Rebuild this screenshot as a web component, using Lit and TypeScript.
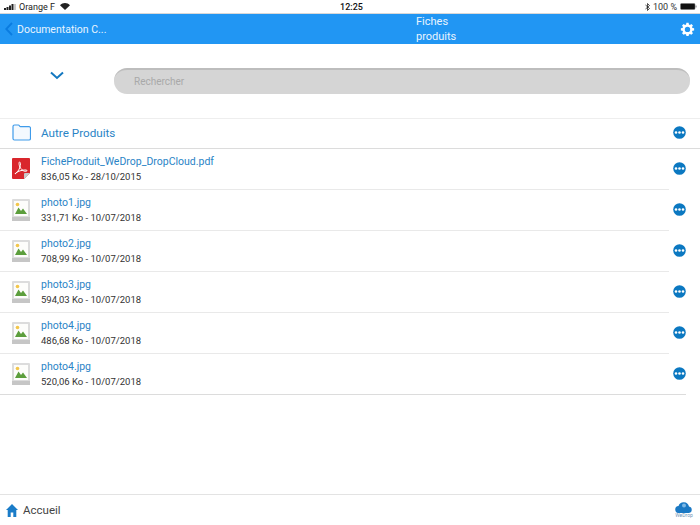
import { LitElement, html, css, svg } from "lit";
import { customElement } from "lit/decorators.js";

const files = [
  { name: "FicheProduit_WeDrop_DropCloud.pdf", meta: "836,05 Ko - 28/10/2015", pdf: true },
  { name: "photo1.jpg", meta: "331,71 Ko - 10/07/2018" },
  { name: "photo2.jpg", meta: "708,99 Ko - 10/07/2018" },
  { name: "photo3.jpg", meta: "594,03 Ko - 10/07/2018" },
  { name: "photo4.jpg", meta: "486,68 Ko - 10/07/2018" },
  { name: "photo4.jpg", meta: "520,06 Ko - 10/07/2018" },
];

const more = html`<svg class="more" width="13" height="13" viewBox="0 0 13 13"><circle cx="6.5" cy="6.5" r="6.3" fill="#0b78c1"/><circle cx="3" cy="6.5" r="1.3" fill="#fff"/><circle cx="6.5" cy="6.5" r="1.3" fill="#fff"/><circle cx="10" cy="6.5" r="1.3" fill="#fff"/></svg>`;

const pdfIcon = html`<svg width="18" height="21" viewBox="0 0 18 21"><path d="M1 0h16a1 1 0 0 1 1 1v14l-6 6H1a1 1 0 0 1-1-1V1a1 1 0 0 1 1-1z" fill="#d9262c"/><path d="M18 15h-5a1 1 0 0 0-1 1v5z" fill="#c9c9c9"/><path d="M3 16c2-1 4-4 5-7 .6-2 .6-5-.3-5-1 0-.8 3 .2 5 1 2 3 4 5 4.300 1.500.2 2.500-.3 2-.9-.6-.7-3-.5-6 .2-2.500.6-5.500 2-5.900 3.400z" fill="none" stroke="#fff" stroke-width="1"/></svg>`;

const imgIcon = html`<svg width="18" height="22" viewBox="0 0 18 22"><rect width="18" height="22" rx="1" fill="#dcdcdc"/><rect x="0" y="18" width="18" height="4" fill="#c6c6c6"/><rect x="2" y="2" width="14" height="15" fill="#fdfdfb"/><circle cx="5.500" cy="5.500" r="1.800" fill="#f3c64b"/><path d="M3 15l3.500-6.500 2.500 3.500 2-2.500 4 5.500z" fill="#5c9e3c"/></svg>`;

const folderIcon = html`<svg width="19" height="17" viewBox="0 0 19 17"><path d="M1 3V2.500a1.500 1.500 0 0 1 1.500-1.500h4c.8 0 1 1.700 2 1.700h8.500A1.500 1.500 0 0 1 18.500 4.200v10.300A1.500 1.500 0 0 1 17 16H2.500A1.500 1.500 0 0 1 1 14.500z" fill="#f4f9fe" stroke="#3f9bea" stroke-width="1.200"/></svg>`;

const gear = svg`<path fill="#fff" fill-rule="evenodd" d="M6.600 0h2.800l.4 2.100 1.300.6 1.800-1.200 2 2-1.200 1.800.6 1.300 2.100.4v2.800l-2.100.4-.6 1.300 1.200 1.800-2 2-1.800-1.200-1.300.6-.4 2.100H6.600l-.4-2.100-1.300-.6-1.800 1.200-2-2 1.200-1.800-.6-1.300L-.4 9.800V7l2.100-.4.600-1.300L1.100 3.500l2-2 1.800 1.200 1.300-.6zM8 5a3.400 3.400 0 1 0 0 6.800A3.400 3.400 0 0 0 8 5z"/>`;

@customElement("app-root")
export class AppRoot extends LitElement {
  static styles = css`
    :host { display: flex; flex-direction: column; width: 700px; height: 525px; background: #fff; overflow: hidden;
      font-family: Roboto, "Liberation Sans", sans-serif; }
    .status { height: 13px; display: grid; grid-template-columns: 1fr auto 1fr; align-items: center; font-size: 9px; color: #222; padding: 0 3px 0 4px; box-sizing: border-box; }
    .status .l, .status .r { display: flex; align-items: center; gap: 3px; }
    .status .r { justify-content: flex-end; color: #333; }
    .time { font-weight: 500; color: #111; margin-left: 2px; }
    .sep { height: 1px; background: #d8d8d8; }
    nav { height: 30px; background: #2196f3; display: grid; grid-template-columns: 406px auto 1fr; align-items: center; color: #e8f4fe; font-size: 10.500px; flex: none; box-sizing: border-box; padding: 0 5px; }
    .back { display: flex; align-items: center; gap: 4px; }
    .title { line-height: 15px; white-space: nowrap; margin-left: 5px; font-size: 11px; }
    .gear { justify-self: end; display: block; margin-top: 1px; }
    .search { height: 74px; flex: none; display: flex; align-items: center; box-sizing: border-box; padding: 0 10px 0 50px; gap: 50px; }
    .chev { margin-bottom: 12px; flex: none; }
    .pill { flex: 1; height: 26px; border-radius: 13px; background: #d5d5d5; border-top: 2px solid #bdbdbd; box-sizing: border-box; display: flex; align-items: center; padding: 0 0 2px 20px; color: #a9a9a9; font-size: 10px; }
    .folder { height: 31px; flex: none; box-sizing: border-box; border-top: 1px solid #eeeeee; border-bottom: 1px solid #dcdcdc; display: flex; align-items: center; padding: 0 14px 2px 12px; }
    .folder .fname { color: #2a84c6; font-size: 11.700px; margin-left: 10px; flex: 1; }
    .row { height: 41px; flex: none; display: flex; align-items: center; padding: 0 14px 2px 12px; position: relative; box-sizing: border-box; }
    .row .ic { width: 18px; height: 22px; flex: none; display: flex; }
    .body { margin-left: 11px; flex: 1; display: flex; flex-direction: column; gap: 2px; }
    .name { color: #2a84c6; font-size: 10.500px; line-height: 14px; }
    .meta { color: #333; font-size: 9.500px; line-height: 12px; }
    .rule { position: absolute; left: 0; bottom: 0; width: 669px; height: 1px; background: #e9e9e9; }
    .rule.last { width: 686px; background: #dcdcdc; }
    .more { flex: none; display: block; }
    .row .more { margin-top: -1px; }
    .grow { flex: 1; }
    footer { height: 31px; flex: none; box-sizing: border-box; border-top: 1px solid #e3e3e3; display: flex; align-items: center; padding: 0 7px 0 6px; gap: 5px; color: #444; font-size: 11.500px; }
    .logo { margin-left: auto; display: flex; flex-direction: column; align-items: center; font-size: 5px; color: #6f93b5; line-height: 5px; }
  `;

  render() {
    return html`
      <div class="status">
        <div class="l">
          <svg width="12" height="6" viewBox="0 0 12 6"><rect x="0" y="4" width="2" height="2" fill="#222"/><rect x="2.500" y="3" width="2" height="3" fill="#222"/><rect x="5" y="1.500" width="2" height="4.500" fill="#222"/><rect x="7.500" y="0" width="2" height="6" fill="#222"/><rect x="10.500" y="0" width="1" height="6" fill="#999"/></svg>
          <span>Orange F</span>
          <svg width="10" height="7" viewBox="0 0 10 7" style="margin-left:2px"><path d="M5 7L0 2.200C2.800-.7 7.200-.7 10 2.200z" fill="#222"/></svg>
        </div>
        <div class="time">12:25</div>
        <div class="r">
          <svg width="5" height="8" viewBox="0 0 5 8"><path d="M.5 2l4 3.500L2.500 7.500v-7l2 2-4 3.500" fill="none" stroke="#222" stroke-width=".8"/></svg>
          <span>100 %</span>
          <svg width="17" height="7" viewBox="0 0 17 7"><rect x=".5" y=".5" width="14.500" height="6" rx="1" fill="#111" stroke="#777" stroke-width=".5"/><rect x="15.500" y="2.500" width="1" height="2" fill="#777"/></svg>
        </div>
      </div>
      <div class="sep"></div>
      <nav>
        <div class="back">
          <svg width="8" height="14" viewBox="0 0 8 14"><path d="M7 1L1.200 7 7 13" fill="none" stroke="#0a7ce0" stroke-width="1.800"/></svg>
          <span>Documentation C...</span>
        </div>
        <div class="title">Fiches<br />produits</div>
        <svg class="gear" width="15" height="15" viewBox="-1 -1 18 19">${gear}</svg>
      </nav>
      <div class="search">
        <svg class="chev" width="14" height="9" viewBox="0 0 14 9"><path d="M1 1.500l6 5.500 6-5.500" fill="none" stroke="#1478c0" stroke-width="2"/></svg>
        <div class="pill">Rechercher</div>
      </div>
      <div class="folder">
        ${folderIcon}
        <span class="fname">Autre Produits</span>
        ${more}
      </div>
      ${files.map(
        (f, i) => html`<div class="row">
          <div class="ic">${f.pdf ? pdfIcon : imgIcon}</div>
          <div class="body"><div class="name">${f.name}</div><div class="meta">${f.meta}</div></div>
          ${more}
          <div class="rule ${i === files.length - 1 ? "last" : ""}"></div>
        </div>`
      )}
      <div class="grow"></div>
      <footer>
        <svg width="12" height="13" viewBox="0 0 12 13"><path d="M6 0L0 6h1.700v7h3V8.500h2.600V13h3V6H12z" fill="#1a7cc8"/></svg>
        <span>Accueil</span>
        <div class="logo">
          <svg width="18" height="11" viewBox="0 0 18 11"><path d="M4 11a3.500 3.500 0 0 1-.5-7A5.500 5.500 0 0 1 14 4.500 3.300 3.300 0 0 1 14 11z" fill="#1b79c4"/><circle cx="9" cy="3.500" r="2" fill="#7db8e6"/></svg>
          <span>WeDrop</span>
        </div>
      </footer>
    `;
  }
}
